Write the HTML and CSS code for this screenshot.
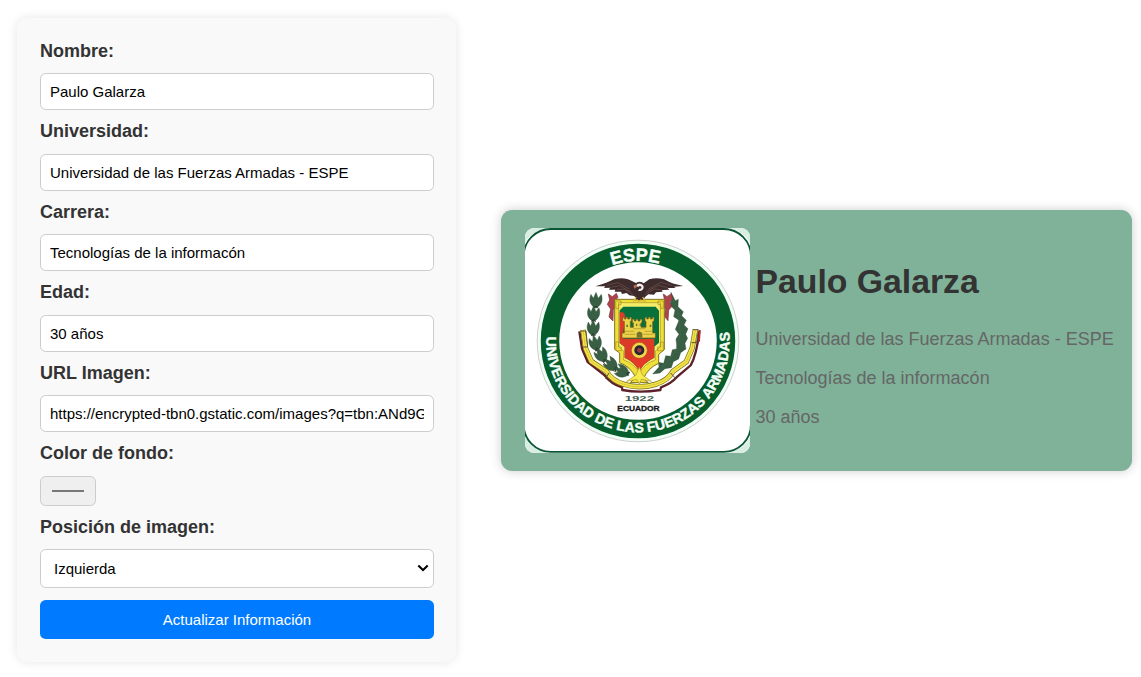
FILE: index.html
```html
<!DOCTYPE html>
<html lang="es">
<head>
<meta charset="utf-8">
<title>Tarjeta de presentación</title>
<link rel="stylesheet" href="styles.css">
</head>
<body>
<main class="layout">
  <form class="panel">
    <label class="label" for="nombre">Nombre:</label>
    <input class="field" id="nombre" type="text" value="Paulo Galarza">
    <label class="label" for="universidad">Universidad:</label>
    <input class="field" id="universidad" type="text" value="Universidad de las Fuerzas Armadas - ESPE">
    <label class="label" for="carrera">Carrera:</label>
    <input class="field" id="carrera" type="text" value="Tecnologías de la informacón">
    <label class="label" for="edad">Edad:</label>
    <input class="field" id="edad" type="text" value="30 años">
    <label class="label" for="imagen">URL Imagen:</label>
    <input class="field" id="imagen" type="text" value="https://encrypted-tbn0.gstatic.com/images?q=tbn:ANd9GcQ">
    <label class="label" for="color">Color de fondo:</label>
    <input class="swatch" id="color" type="color" value="#7fb299">
    <label class="label" for="posicion">Posición de imagen:</label>
    <div class="select-wrap">
      <select class="field select" id="posicion"><option>Izquierda</option><option>Derecha</option></select>
      <svg class="chevron" viewBox="0 0 12 8"><path d="M1.3 1.5L6 6L10.7 1.5" fill="none" stroke="#000" stroke-width="2"/></svg>
    </div>
    <button class="button" type="button">Actualizar Información</button>
  </form>

  <section class="stage">
    <article class="card">
      <svg class="emblem" viewBox="0 0 225 225" role="img" aria-label="ESPE">
        <defs>
          <path id="arcTop" d="M33 113A80 80 0 0 1 193 113"/>
          <path id="arcBottom" d="M21.3 109A91.7 91.7 0 1 0 204 102"/>
          <g id="leaf">
            <path d="M0 22C-20 12-22-4-15-20L-8-8 0-26 7-8 16-20C22-3 17 13 0 22Z"/>
            <path d="M-6 22L0 15 6 22" fill="none" stroke="#26352b" stroke-width="3"/>
          </g>
        </defs>
        <rect width="225" height="225" fill="#fdfffd"/>
        <path d="M0 0H22Q6 3 0 15ZM225 0H203Q219 3 225 15ZM0 225H22Q6 221 0 209ZM225 225H203Q219 221 225 209Z" fill="#d9eee3"/>
        <rect x="-1.3" y="1" width="227.2" height="222.8" rx="27" fill="#fefffe" stroke="#0b5635" stroke-width="1.8"/>
        <circle cx="113" cy="113" r="100.8" fill="#effff5" stroke="#b7adb2" stroke-width=".6"/>
        <circle cx="113" cy="113" r="88" fill="#fff" stroke="#075e2d" stroke-width="18.5"/>
        <g class="seal-text">
          <text class="seal-top"><textPath href="#arcTop" startOffset="49%" text-anchor="middle">ESPE</textPath></text>
          <text class="seal-bottom"><textPath href="#arcBottom" textLength="300" lengthAdjust="spacingAndGlyphs">UNIVERSIDAD DE LAS FUERZAS ARMADAS</textPath></text>
        </g>

        <g transform="translate(55 42) scale(.33333)">
          <!-- laurel branches -->
          <g fill="#385f43" stroke="#26452f" stroke-width="1">
            <path d="M45 85C32 145 30 220 68 275Q95 308 138 315" fill="none" stroke="#765643" stroke-width="3"/>
            <use href="#leaf" transform="translate(48 93)"/>
            <use href="#leaf" transform="translate(41 133)"/>
            <use href="#leaf" transform="translate(40 176)"/>
            <use href="#leaf" transform="translate(47 221) rotate(-14)"/>
            <use href="#leaf" transform="translate(65 256) rotate(-32)"/>
            <use href="#leaf" transform="translate(94 284) rotate(-49)"/>
            <use href="#leaf" transform="translate(127 304) rotate(-68)"/>
            <path d="M273 67L286 92 295 88 294 110 310 125 305 137 319 151 312 165 324 176 317 193 323 205 315 220 318 237 302 248 296 267 280 275 274 293 255 296 240 309 218 312 237 291 235 277 251 280 257 257 272 259 277 239 291 237 288 207 297 193 286 178 297 151 281 140 285 120 270 106 274 90Z"/>
            <path d="M276 82C305 155 324 230 232 306" fill="none" stroke="#49664f" stroke-width="2"/>
          </g>
          <!-- flag bands -->
          <path d="M-2 184L6 236 23 276 73 315Q93 342 126 352L127 360Q178 370 241 360L243 352Q273 342 293 319L332 286Q350 254 358 184" fill="none" stroke="#5e2029" stroke-width="7"/>
          <path d="M9 180L17 236 34 274 79 304Q95 332 132 343Q178 358 226 343Q264 332 279 304L319 275 336 236 346 180" fill="none" stroke="#756b15" stroke-width="16"/>
          <path d="M9 180L17 236 34 274 79 304Q95 332 132 343Q178 358 226 343Q264 332 279 304L319 275 336 236 346 180" fill="none" stroke="#f3e548" stroke-width="12"/>
          <path d="M9 180L17 236 34 274 79 304Q95 332 132 343Q178 358 226 343Q264 332 279 304L319 275 336 236 346 180" fill="none" stroke="#c9b737" stroke-width="2"/>
          <path d="M0 183H18L23 231H10M338 179H355L350 218H334M87 309L76 326M272 309L287 326" fill="none" stroke="#5c532b" stroke-width="3"/>
          <path d="M357 180h5l-2 35h-6z" fill="#b62b31"/>
          <!-- side ribbons -->
          <path d="M85 72l12 8 12-10 5 12-9 10 3 17-8 10-1 34-12-12 5-24-10-14 7-13zM250 72l11 8 13-9 3 15-7 10 5 14-9 10-2 32-11-13 4-20-8-16 4-15z" fill="#ae444b" stroke="#743039" stroke-width="2"/>
          <!-- shield -->
          <path d="M104 88H253V239L236 253V280Q206 292 190 326L205 338H151L167 322Q150 289 119 278V249L104 238Z" fill="#f0df39" stroke="#7e721c" stroke-width="3"/>
          <path d="M116 98H241V231L226 243V270Q192 281 178 309Q164 281 131 270V243L116 231Z" fill="#f5ed69" stroke="#a49225" stroke-width="2"/>
          <path d="M130 110H227L237 122V218L223 230V263Q190 278 178 304Q163 275 134 263V231L119 219V121Z" fill="#08713b"/>
          <path d="M119 126L132 128 139 150 130 180 130 206H223V263Q190 278 178 304Q163 275 134 263V231L119 219Z" fill="#dc3b27"/>
          <path d="M147 267Q166 280 178 303Q188 282 208 267Z" fill="#e53929"/>
          <path d="M107 93h16v11h-7v12h-8zM234 93h16v22h-8v-11h-8zM107 216h9v15h8v11h-16zM242 216h8v26h-17v-11h9z" fill="none" stroke="#a28c20" stroke-width="2"/>
          <!-- castle -->
          <path d="M128 142h5v5h5v-5h5v5h6v-5h5v12h-3v18h9v-14h-3v-10h6v5h5v-5h6v5h6v-5h6v10h-3v14h15v-18h-3v-12h5v5h5v-5h6v5h6v-5h5v12h-4v35h8v15H126v-15h7v-35h-5z" fill="#ecd449" stroke="#725e19" stroke-width="2"/>
          <path d="M170 203v-13q8-11 17 0v13zM139 164h5v7h-5zM209 164h5v7h-5zM168 161h4v7h-4zM179 161h4v7h-4z" fill="#75732c"/>
          <path d="M135 184H162M194 184H219M134 193H166M190 193H220M160 176H196" stroke="#a98c28" stroke-width="2"/>
          <circle cx="178" cy="241" r="24" fill="#f3d64a" stroke="#b44828" stroke-width="2"/>
          <circle cx="178" cy="241" r="15" fill="#25262c"/>
          <circle cx="178" cy="241" r="7" fill="#9b344b"/>
          <path d="M178 291L187 315 214 334 184 328 178 342 171 328 140 334 168 315Z" fill="#f7eb4d" stroke="#a99a2c" stroke-width="2"/>
          <!-- condor -->
          <path d="M46 49Q82 38 104 27Q135 20 157 34L168 39Q181 31 191 40L208 28Q229 21 252 28Q278 43 310 48L282 50 287 54 263 54 268 59 246 60 248 65 228 67 222 74 205 73 196 80 188 91H170L163 78 148 76 140 69 126 72 123 65 104 65 106 59 87 59 90 53 72 54 76 49Z" fill="#3e2b2b"/>
          <path d="M80 46L114 38 148 57M91 52L119 47 153 66M111 59L133 57 160 74M277 46L242 37 205 58M263 53L235 46 198 66M246 60L224 57 194 74" fill="none" stroke="#715352" stroke-width="2"/>
          <path d="M168 48q5-10 16-6 10 5 6 14-5 10-16 6l4-6q8 0 6-6-5-4-9 1z" fill="#f7eeee"/>
          <path d="M160 47l9-4 3 7-9 6z" fill="#b36b55"/>
          <path d="M168 81l-6 12 10-3 5 7 5-7 14 4-8-13" fill="none" stroke="#e0bd38" stroke-width="4"/>
          <text class="year" x="134" y="394" textLength="88" lengthAdjust="spacingAndGlyphs">1922</text>
          <text class="country" x="112" y="422" textLength="127" lengthAdjust="spacingAndGlyphs">ECUADOR</text>
        </g>
      </svg>
      <div class="info">
        <h1 class="name">Paulo Galarza</h1>
        <p class="detail">Universidad de las Fuerzas Armadas - ESPE</p>
        <p class="detail">Tecnologías de la informacón</p>
        <p class="detail">30 años</p>
      </div>
    </article>
  </section>
</main>
</body>
</html>
```

FILE: styles.css
```css
* { box-sizing: border-box; }
body {
  margin: 0;
  background: #fff;
  font-family: "Liberation Sans", Arial, sans-serif;
  font-size: 18px;
  overflow: hidden;
}
.layout {
  display: flex;
  align-items: center;
  gap: 45px;
  height: 677px;
  padding: 18px 9px 15px 17px;
}
.panel {
  display: flex;
  flex-direction: column;
  width: 439px;
  height: 644px;
  padding: 22.5px 22px 22.5px 23px;
  border-radius: 11px;
  background: #f9f9f9;
  box-shadow: 0 0 11px rgba(0, 0, 0, .1);
}
.label {
  height: 21px;
  margin-bottom: 11.5px;
  line-height: 21px;
  font-weight: bold;
  color: #333;
}
.field {
  width: 100%;
  height: 37px;
  margin: 0 0 11px;
  padding: 9px;
  border: 1px solid #ccc;
  border-radius: 5.6px;
  background: #fff;
  font: 15px "Liberation Sans", Arial, sans-serif;
  color: #000;
}
.swatch {
  width: 56px;
  height: 30px;
  margin: 0 0 11px;
  padding: 9px;
  border: 1px solid #ccc;
  border-radius: 5.6px;
  background: #efefef;
}
.select-wrap {
  position: relative;
  height: 39px;
  margin-bottom: 12px;
}
.select {
  display: block;
  height: 39px;
  margin: 0;
  padding-left: 13px;
  appearance: none;
}
.chevron {
  position: absolute;
  top: 15px;
  right: 5px;
  width: 12px;
  height: 8px;
  pointer-events: none;
}
.button {
  height: 39px;
  padding: 0;
  border: 0;
  border-radius: 5.6px;
  background: #007bff;
  color: #fff;
  font: 15px "Liberation Sans", Arial, sans-serif;
}
.stage { flex: 1; }
.card {
  display: flex;
  align-items: center;
  gap: 5.5px;
  height: 261px;
  padding: 18px 18px 18px 24px;
  border-radius: 11px;
  background: #7fb299;
  box-shadow: 0 0 11px rgba(0, 0, 0, .2);
}
.emblem {
  flex: none;
  width: 225px;
  height: 225px;
  border-radius: 9px;
}
.seal-text {
  fill: #f5fff8;
  stroke: #f5fff8;
  stroke-width: .4;
  font-family: "Liberation Sans", Arial, sans-serif;
  font-weight: bold;
}
.seal-top { font-size: 18px; }
.seal-bottom { font-size: 14px; }
.year { fill: #3f6251; font: bold 21px "Liberation Sans", Arial, sans-serif; }
.country { fill: #161616; stroke: #161616; stroke-width: 1; font: bold 24px "Liberation Sans", Arial, sans-serif; }
.info { padding-top: 8px; white-space: nowrap; }
.name {
  margin: 0 0 27px;
  line-height: 41px;
  font-size: 33.75px;
  color: #333;
}
.detail { margin: 0 0 18px; line-height: 21px; color: #666; }
.detail:last-child { margin-bottom: 0; }
```
